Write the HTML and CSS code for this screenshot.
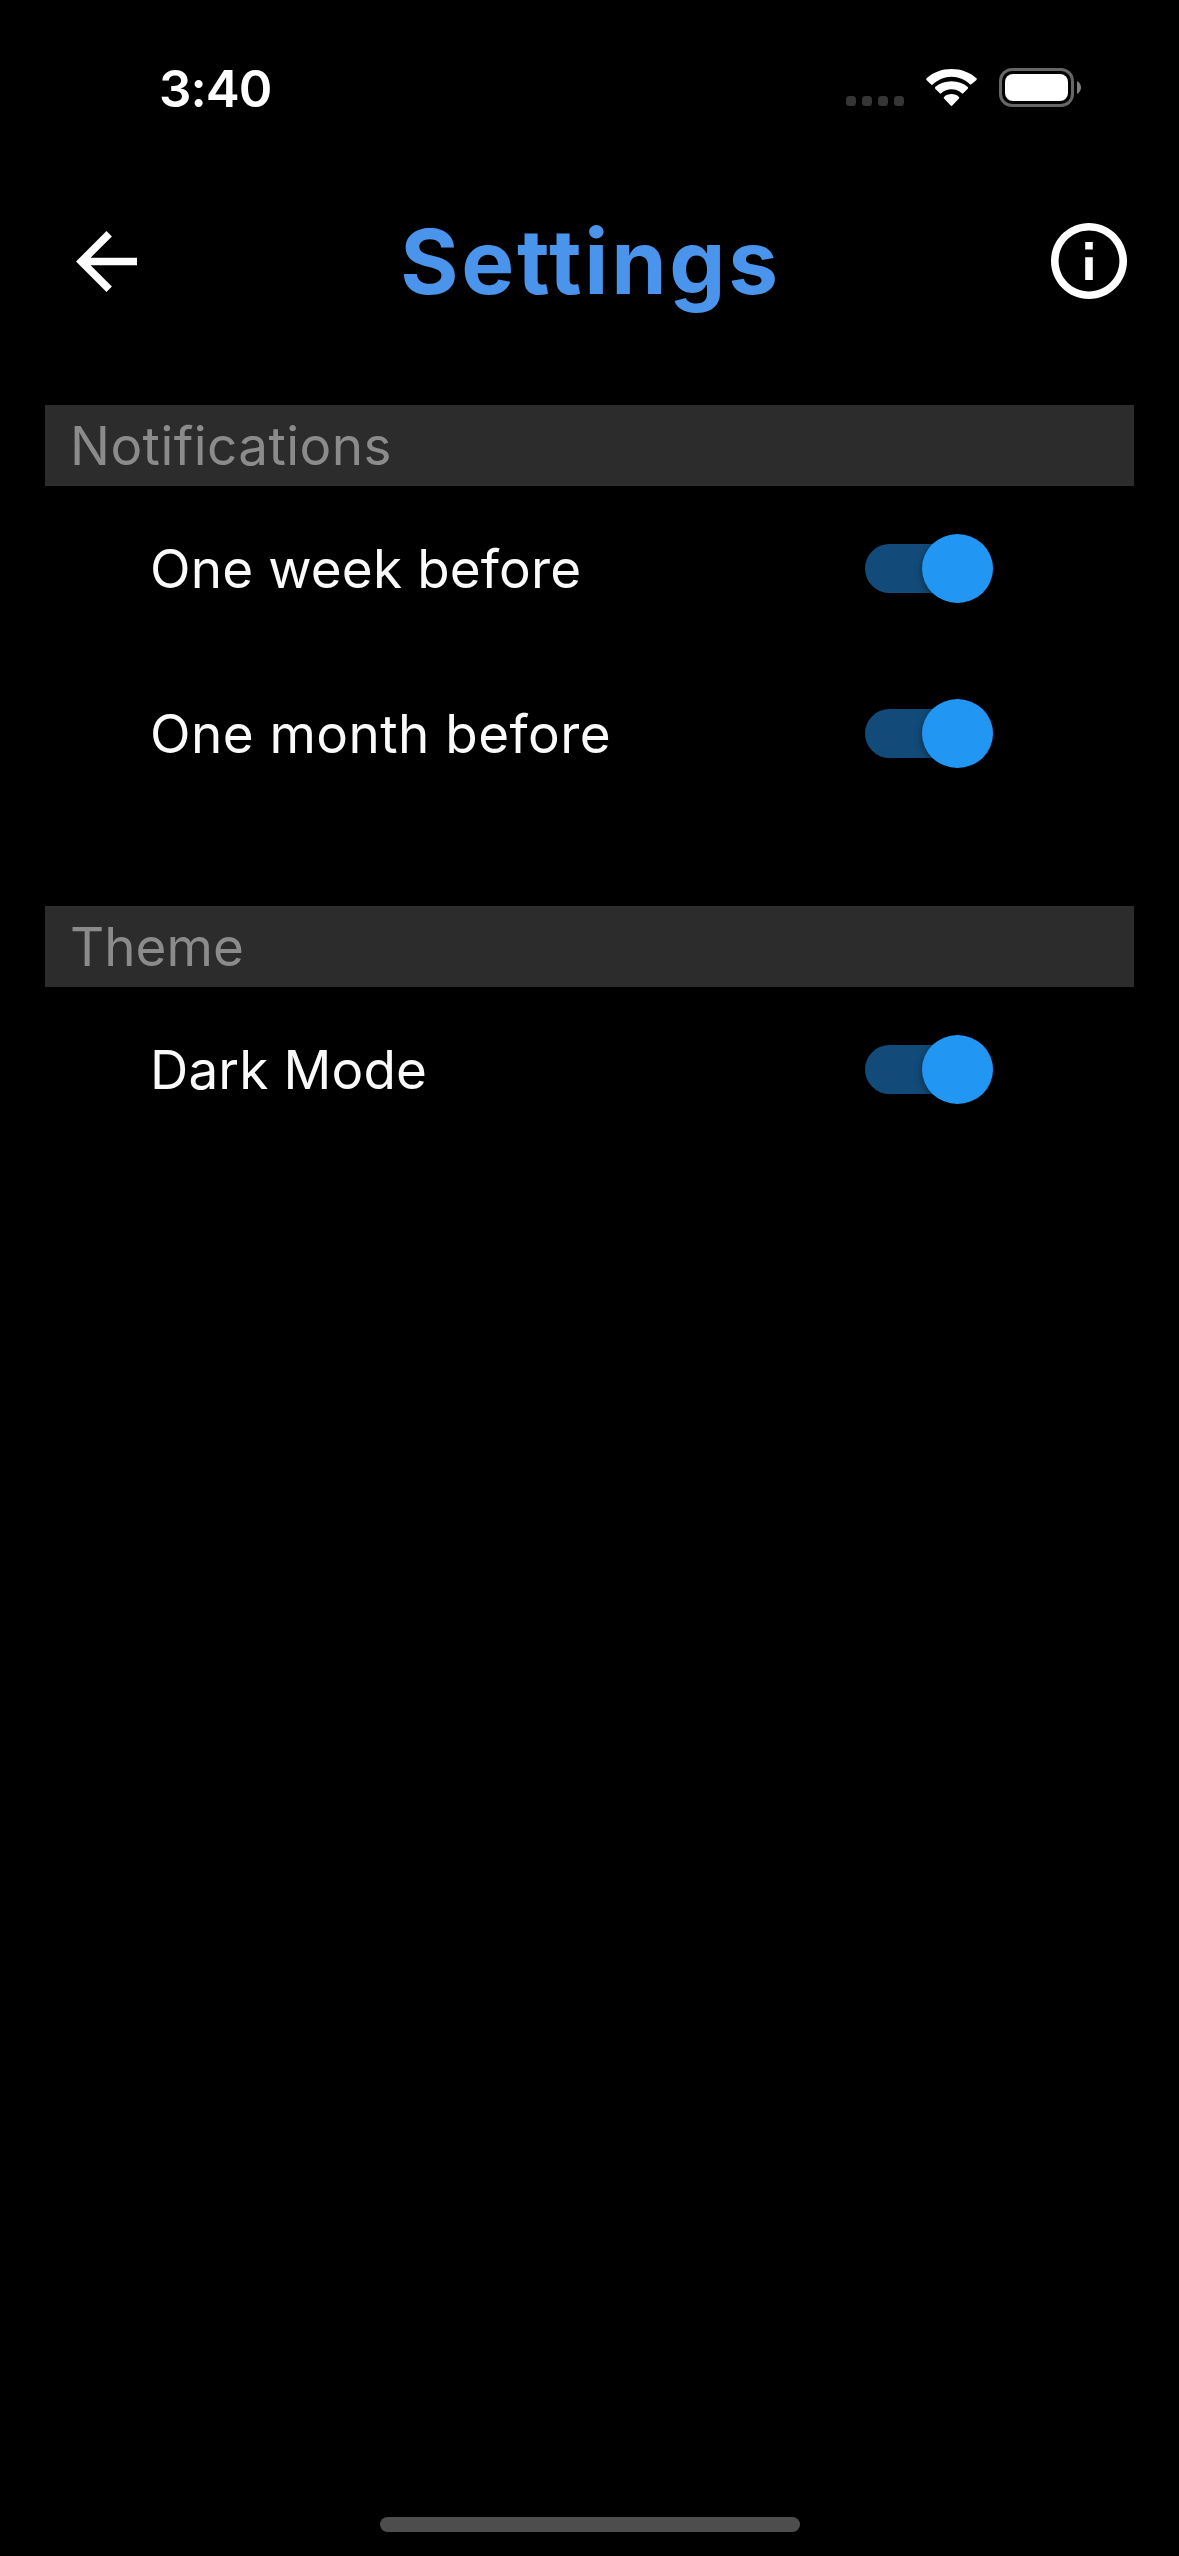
FILE: index.html
```html
<!DOCTYPE html>
<html lang="en">
<head>
<meta charset="utf-8">
<title>Settings</title>
<link rel="stylesheet" href="styles.css">
</head>
<body>
<div class="status">
  <span class="time">3:40</span>
  <span class="dots"><i></i><i></i><i></i><i></i></span>
  <svg class="wifi" width="51" height="37" viewBox="0.5 1 51 36" preserveAspectRatio="none"><path fill="#fff" d="M26 8.500c7 0 13.500 2.700 18.400 7.300.4.400 1 .4 1.400 0l5.200-4.200c.4-.4.4-1.100 0-1.500C44.300 4.200 35.600 1 26 1S7.700 4.200 1 10.100c-.4.4-.4 1.100 0 1.500l4.600 4.600c.4.400 1.200.4 1.600 0C12.500 11.200 19 8.500 26 8.500zm0 12.300c3.900 0 7.500 1.400 10.300 3.900.4.400 1 .4 1.400 0l4.600-4.600c.4-.4.4-1.100 0-1.500C38 15 32.300 13 26 13s-12 2-16.300 5.600c-.4.4-.4 1.100 0 1.500l4.600 4.600c.4.400 1 .4 1.400 0 2.800-2.500 6.400-3.900 10.300-3.900zm7.500 8.900c.4-.4.4-1.100 0-1.500-4.300-3.700-10.700-3.700-15 0-.4.4-.4 1.100 0 1.500l6.700 6.900c.4.400 1.200.4 1.600 0z"/></svg>
  <svg class="battery" width="82" height="39" viewBox="0 0 82 39"><rect x="1.500" y="1.500" width="72" height="36" rx="11.500" fill="none" stroke="#666" stroke-width="3"/><rect x="6" y="6" width="63" height="27" rx="8" fill="#fff"/><path fill="#808080" d="M78 13c2.500 1.200 4 3.700 4 6.500S80.500 24.800 78 26z"/></svg>
</div>
<header class="bar">
  <svg class="back" width="61" height="61" viewBox="4 4 16 16"><path fill="#fff" d="M20 11H7.830l5.590-5.590L12 4l-8 8 8 8 1.410-1.410L7.830 13H20v-2z"/></svg>
  <h1 class="title">Settings</h1>
  <svg class="info" width="76" height="76" viewBox="2 2 20 20"><path fill="#fff" d="M11 7h2v2h-2zm0 4h2v6h-2zm1-9C6.480 2 2 6.480 2 12s4.480 10 10 10 10-4.480 10-10S17.520 2 12 2zm0 18c-4.410 0-8-3.590-8-8s3.590-8 8-8 8 3.590 8 8-3.590 8-8 8z"/></svg>
</header>
<main class="content">
  <section class="group">
    <h2 class="heading">Notifications</h2>
    <div class="row"><span class="label week">One week before</span><span class="switch"></span></div>
    <div class="row"><span class="label month">One month before</span><span class="switch"></span></div>
  </section>
  <section class="group">
    <h2 class="heading theme">Theme</h2>
    <div class="row"><span class="label dark">Dark Mode</span><span class="switch"></span></div>
  </section>
</main>
<div class="home"></div>
</body>
</html>
```
FILE: styles.css
```css
* { box-sizing: border-box; }
body { margin: 0; height: 2556px; background: #000; color: #fff; font-family: Inter, sans-serif; display: flex; flex-direction: column; overflow: hidden; }
.status { height: 176px; padding: 68px 98px 0 159px; display: flex; align-items: flex-start; }
.time { font-size: 51px; font-weight: 570; line-height: 60px; letter-spacing: -1px; margin-top: -9px; }
.dots { display: flex; gap: 6px; margin: 28px 22px 0 auto; }
.dots i { width: 10px; height: 10px; border-radius: 3.5px; background: #353535; }
.wifi { margin-top: 1px; }
.battery { margin-left: 22px; }
.bar { height: 170px; padding: 0 52px 0 76px; display: flex; align-items: center; justify-content: space-between; }
.title { margin: 1px 7px 0 0; font-size: 89px; font-weight: 700; line-height: 110px; letter-spacing: 2.7px; color: #4a94ec; }
.content { padding: 59px 45px 0; }
.group { height: 501px; }
.heading { margin: 0; height: 81px; padding-left: 25px; background: #2c2c2c; color: #8b8b8b; font-size: 53px; font-weight: 400; line-height: 83px; letter-spacing: 0.45px; }
.heading.theme { letter-spacing: 0; }
.row { height: 165px; padding: 0 141px 0 105px; display: flex; align-items: center; justify-content: space-between; }
.label { font-size: 53px; line-height: 64px; color: #fafafa; letter-spacing: 0.15px; }
.label.month { letter-spacing: 0.45px; }
.switch { width: 128px; height: 49px; display: flex; align-items: center; justify-content: flex-end; background: #124b79; border-radius: 25px; }
.switch::after { content: ""; flex: none; width: 71px; height: 69px; border-radius: 50%; background: #2196f3; box-shadow: 0 3px 9px rgba(0, 0, 0, 0.4); }
.home { margin: auto auto 24px; width: 420px; height: 15px; border-radius: 8px; background: #4d4d4d; }
```
